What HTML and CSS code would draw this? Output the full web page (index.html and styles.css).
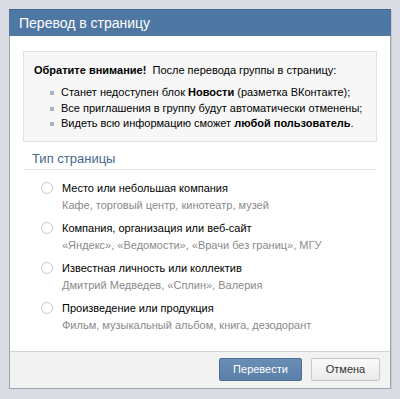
FILE: index.html
```html
<!DOCTYPE html>
<html lang="ru">

<head>
    <meta charset="UTF-8">
    <title>Перевод в страницу</title>
    <link rel="stylesheet" href="styles.css">
</head>

<body>
    <div class="dialog">
        <div class="dialog-title">Перевод в страницу</div>

        <div class="dialog-body">
            <div class="notice">
                <div class="notice-head"><b>Обратите внимание!</b>&nbsp; После перевода группы в страницу:</div>
                <ul class="notice-list">
                    <li>Станет недоступен блок <b>Новости</b> (разметка ВКонтакте);</li>
                    <li>Все приглашения в группу будут автоматически отменены;</li>
                    <li>Видеть всю информацию сможет <b>любой пользователь</b>.</li>
                </ul>
            </div>

            <div class="section-title">Тип страницы</div>

            <div class="options">
                <label class="option">
                    <span class="radio"></span>
                    <span class="option-text">
                        <span class="option-name">Место или небольшая компания</span>
                        <span class="option-hint">Кафе, торговый центр, кинотеатр, музей</span>
                    </span>
                </label>
                <label class="option">
                    <span class="radio"></span>
                    <span class="option-text">
                        <span class="option-name">Компания, организация или веб-сайт</span>
                        <span class="option-hint">«Яндекс», «Ведомости», «Врачи без границ», МГУ</span>
                    </span>
                </label>
                <label class="option">
                    <span class="radio"></span>
                    <span class="option-text">
                        <span class="option-name">Известная личность или коллектив</span>
                        <span class="option-hint">Дмитрий Медведев, «Сплин», Валерия</span>
                    </span>
                </label>
                <label class="option">
                    <span class="radio"></span>
                    <span class="option-text">
                        <span class="option-name">Произведение или продукция</span>
                        <span class="option-hint">Фильм, музыкальный альбом, книга, дезодорант</span>
                    </span>
                </label>
            </div>
        </div>

        <div class="dialog-footer">
            <button class="btn btn-blue">Перевести</button>
            <button class="btn btn-gray">Отмена</button>
        </div>
    </div>
</body>

</html>
```

FILE: styles.css
```css
body {
    margin: 0;
    padding: 9px 0 0 9px;
    background: #d9dde3;
    font-family: 'Liberation Sans', Arial, sans-serif;
    font-size: 11px;
    color: #000;
}

/* Окно */
.dialog {
    width: 380px;
    border: 1px solid #9ea6b0;
    border-top: none;
    background: #fff;
    box-shadow: 1px 1px 0 #c4c9d0;
}

.dialog-title {
    height: 27px;
    line-height: 26px;
    padding-left: 10px;
    background: #4e77a3;
    border-top: 1px solid #3f6690;
    box-sizing: border-box;
    margin: 0 -1px;
    color: #fff;
    font-size: 14px;
}

.dialog-body {
    padding: 15px 13px 10px 13px;
}

/* Блок предупреждения */
.notice {
    background: #f7f7f7;
    border: 1px solid #e1e1e1;
    padding: 10px 10px 9px 10px;
}

.notice-head {
    line-height: 16px;
}

.notice-list {
    list-style: none;
    margin: 7px 0 0 0;
    padding: 0 0 0 16px;
}

.notice-list li {
    position: relative;
    line-height: 15.5px;
    padding-left: 11px;
}

.notice-list li::before {
    content: "";
    position: absolute;
    left: 0;
    top: 6px;
    width: 4px;
    height: 4px;
    background: #a8b4c2;
}

/* Тип страницы */
.section-title {
    margin-top: 8px;
    padding: 0 0 2px 9px;
    border-bottom: 1px solid #e3e6ea;
    color: #45688e;
    font-size: 13px;
    line-height: 17px;
}

.options {
    padding: 11px 0 0 18px;
}

.option {
    display: flex;
    gap: 9px;
    height: 40px;
}

.radio {
    flex: none;
    width: 12px;
    height: 12px;
    margin-top: 1px;
    border: 1px solid #c5c9ce;
    border-radius: 50%;
    background: #fff;
    box-sizing: border-box;
}

.option-text {
    display: flex;
    flex-direction: column;
}

.option-name {
    line-height: 15px;
}

.option-hint {
    color: #8a8a8a;
    line-height: 18px;
}

/* Кнопки */
.dialog-footer {
    display: flex;
    justify-content: flex-end;
    gap: 9px;
    padding: 6px 10px 7px 0;
    background: #f2f2f2;
    border-top: 1px solid #d3d3d3;
}

.btn {
    height: 23px;
    font-family: 'Liberation Sans', Arial, sans-serif;
    font-size: 11px;
    border-radius: 2px;
    cursor: pointer;
}

.btn-blue {
    width: 83px;
    color: #fff;
    background: linear-gradient(#6a8db5, #5a7fa8);
    border: 1px solid #4a6f98;
}

.btn-gray {
    width: 69px;
    color: #333;
    background: linear-gradient(#fbfbfb, #e9e9e9);
    border: 1px solid #c7c7c7;
}
```
